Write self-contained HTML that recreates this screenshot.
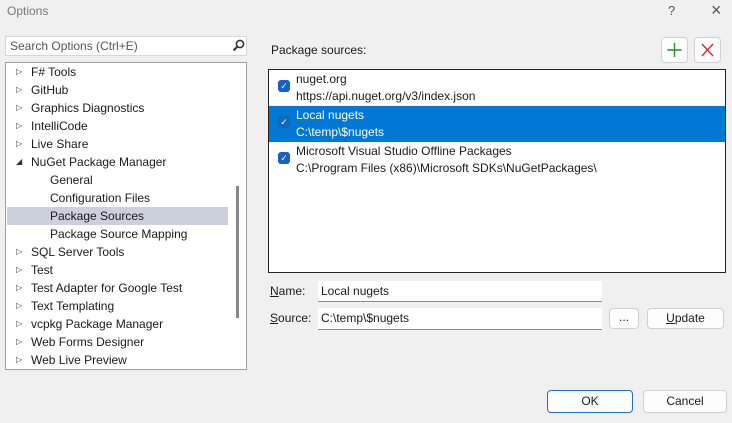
<!DOCTYPE html>
<html><head><style>
*{margin:0;padding:0;box-sizing:border-box}
body{width:732px;height:423px;background:#f0f0f0;font-family:"Liberation Sans",sans-serif;font-size:12px;color:#1a1a1a;position:relative;overflow:hidden}
.a{position:absolute}
.row{position:absolute;left:0;height:18px;line-height:18px;white-space:nowrap}
.tri{position:absolute;left:10px;top:0;font-size:8px;color:#333}
.btn{position:absolute;background:#fdfdfd;border:1px solid #d0d0d0;border-radius:4px;text-align:center}
.cb{position:absolute;left:9px;width:12px;height:12px;background:#1760c4;border-radius:3px;color:#fff;font-size:9px;line-height:12px;text-align:center}
.it{position:absolute;left:0;width:456px;height:36px}
.it div{position:absolute;left:27px;white-space:nowrap}
</style></head><body>
<div class="a" style="left:7px;top:4px;color:#777;font-size:12px">Options</div>
<div class="a" style="left:668px;top:3px;color:#555;font-size:13px">?</div>
<div class="a" style="left:711px;top:0px;color:#555;font-size:18px">×</div>

<div class="a" style="left:5px;top:36px;width:242px;height:20px;background:#fff;border:1px solid #d6d6d6">
<div class="a" style="left:4px;top:2px;color:#555">Search Options (Ctrl+E)</div>
<svg class="a" style="left:226px;top:2px" width="13" height="13"><circle cx="8" cy="5" r="3.6" fill="none" stroke="#333" stroke-width="1.6"/><line x1="5.5" y1="7.5" x2="1.5" y2="11.5" stroke="#333" stroke-width="2"/></svg>
</div>

<div class="a" style="left:5px;top:62px;width:242px;height:308px;background:#fff;border:1px solid #a0a0a0;overflow:hidden">
<div class="a" style="left:1px;top:144px;width:221px;height:18px;background:#ccd0dc"></div>
<div class="a" style="left:230px;top:123px;width:3px;height:132px;background:#888"></div>
<div class="row" style="top:0"><span class="tri">▷</span><span style="margin-left:25px">F# Tools</span></div>
<div class="row" style="top:18px"><span class="tri">▷</span><span style="margin-left:25px">GitHub</span></div>
<div class="row" style="top:36px"><span class="tri">▷</span><span style="margin-left:25px">Graphics Diagnostics</span></div>
<div class="row" style="top:54px"><span class="tri">▷</span><span style="margin-left:25px">IntelliCode</span></div>
<div class="row" style="top:72px"><span class="tri">▷</span><span style="margin-left:25px">Live Share</span></div>
<div class="row" style="top:90px"><span class="tri">◢</span><span style="margin-left:25px">NuGet Package Manager</span></div>
<div class="row" style="top:108px"><span style="margin-left:44px">General</span></div>
<div class="row" style="top:126px"><span style="margin-left:44px">Configuration Files</span></div>
<div class="row" style="top:144px"><span style="margin-left:44px">Package Sources</span></div>
<div class="row" style="top:162px"><span style="margin-left:44px">Package Source Mapping</span></div>
<div class="row" style="top:180px"><span class="tri">▷</span><span style="margin-left:25px">SQL Server Tools</span></div>
<div class="row" style="top:198px"><span class="tri">▷</span><span style="margin-left:25px">Test</span></div>
<div class="row" style="top:216px"><span class="tri">▷</span><span style="margin-left:25px">Test Adapter for Google Test</span></div>
<div class="row" style="top:234px"><span class="tri">▷</span><span style="margin-left:25px">Text Templating</span></div>
<div class="row" style="top:252px"><span class="tri">▷</span><span style="margin-left:25px">vcpkg Package Manager</span></div>
<div class="row" style="top:270px"><span class="tri">▷</span><span style="margin-left:25px">Web Forms Designer</span></div>
<div class="row" style="top:288px"><span class="tri">▷</span><span style="margin-left:25px">Web Live Preview</span></div>
</div>

<div class="a" style="left:271px;top:43px">Package sources:</div>
<div class="btn" style="left:661px;top:37px;width:27px;height:26px"><svg width="25" height="24"><path d="M12.5 5v14M5.5 12h14" stroke="#2a8a2a" stroke-width="1.4"/></svg></div>
<div class="btn" style="left:694px;top:37px;width:27px;height:26px"><svg width="25" height="24"><path d="M7 6l11 12M18 6L7 18" stroke="#c43030" stroke-width="1.4"/></svg></div>

<div class="a" style="left:268px;top:69px;width:458px;height:204px;background:#fff;border:1px solid #222">
<div class="it" style="top:0"><span class="cb" style="top:10px">✓</span><div style="top:2px">nuget.org</div><div style="top:19px">https://api.nuget.org/v3/index.json</div></div>
<div class="it" style="top:36px;background:#0078d4;color:#fff"><span class="cb" style="top:10px;background:#1565b8">✓</span><div style="top:2px">Local nugets</div><div style="top:19px">C:\temp\$nugets</div></div>
<div class="it" style="top:72px"><span class="cb" style="top:10px">✓</span><div style="top:2px">Microsoft Visual Studio Offline Packages</div><div style="top:19px">C:\Program Files (x86)\Microsoft SDKs\NuGetPackages\</div></div>
</div>

<div class="a" style="left:270px;top:284px"><u>N</u>ame:</div>
<div class="a" style="left:318px;top:281px;width:284px;height:21px;background:#fff;border-bottom:1px solid #8a8a8a"><span class="a" style="left:3px;top:3px">Local nugets</span></div>
<div class="a" style="left:270px;top:311px"><u>S</u>ource:</div>
<div class="a" style="left:318px;top:308px;width:284px;height:22px;background:#fff;border-bottom:1px solid #8a8a8a"><span class="a" style="left:3px;top:3px">C:\temp\$nugets</span></div>
<div class="btn" style="left:609px;top:308px;width:30px;height:21px;line-height:17px">...</div>
<div class="btn" style="left:647px;top:308px;width:77px;height:21px;line-height:19px"><u>U</u>pdate</div>

<div class="btn" style="left:547px;top:390px;width:86px;height:23px;line-height:21px;border:1px solid #1d6fc4">OK</div>
<div class="btn" style="left:643px;top:390px;width:84px;height:23px;line-height:21px">Cancel</div>
</body></html>
